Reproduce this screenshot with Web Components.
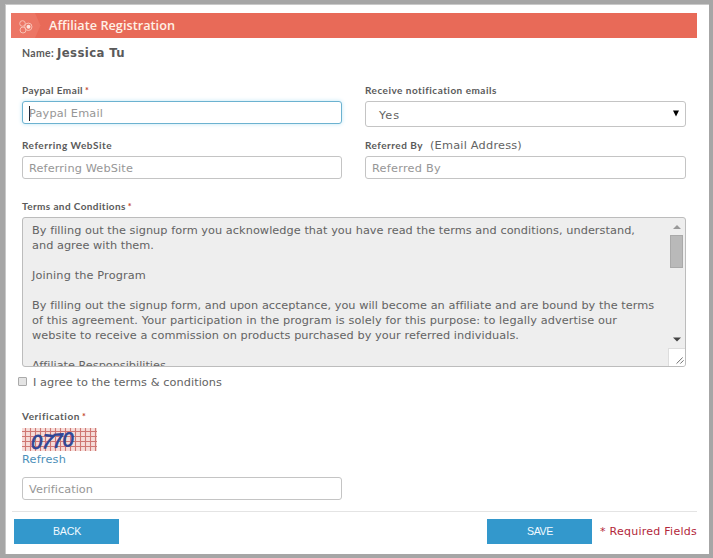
<!DOCTYPE html>
<html lang="en">
<head>
<meta charset="utf-8">
<title>Affiliate Registration</title>
<style>
html,body{margin:0;height:100%;background:#fff}
body{font:11.3px/15px "DejaVu Sans",Verdana,sans-serif;color:#636363;overflow:hidden}
</style>
</head>
<body>
<affiliate-page></affiliate-page>
<script>
class Base extends HTMLElement {
  connectedCallback() {
    if (this.shadowRoot) return;
    this.attachShadow({ mode: 'open' }).innerHTML = this.view();
    this.ready();
  }
  ready() {}
  a(n) { return this.getAttribute(n) || ''; }
}

/* One line of text, tracked so that it spans the width given in "w". */
customElements.define('text-run', class extends Base {
  view() { return '<style>:host{display:inline-block;white-space:pre}</style><span><slot></slot></span>'; }
  ready() {
    const w = +this.a('w'), n = this.textContent.length;
    const now = this.shadowRoot.querySelector('span').getBoundingClientRect().width;
    if (w && n && now) this.style.letterSpacing = ((w - now) / n).toFixed(4) + 'px';
  }
});

customElements.define('title-bar', class extends Base {
  view() { return `<style>
    :host{display:flex;align-items:center;height:25px;background:#e86a58;color:#fff1e6;font:600 12.7px/25px "Open Sans",sans-serif}
    svg{display:block;width:38px;height:25px;flex:none}
    </style>
    <svg viewBox="0 0 38 25"><path d="M0 0H24L29.500 12.500L24 25H0Z" fill="#ec7665"/>
      <g fill="none" stroke="#f8c0b3" stroke-width="1"><circle cx="11.500" cy="10.500" r="2.800"/><circle cx="12" cy="17" r="3"/><circle cx="17.300" cy="13.800" r="3.700"/></g>
      <circle cx="17.500" cy="13.800" r="2" fill="#fde3dc"/></svg><slot></slot>`; }
});

customElements.define('field-label', class extends Base {
  view() { return `<style>
    :host{display:flex;align-items:baseline;height:14px;line-height:14px}
    text-run{font-family:Lato,sans-serif;font-weight:700;font-size:10px;color:#5a5a5a}
    i{font:700 9px/14px Lato,sans-serif;color:#c4452f;margin-left:2px}
    slot{display:block;margin-left:7px}
    </style><text-run w="${this.a('w')}">${this.a('text')}</text-run>${this.hasAttribute('required') ? '<i>*</i>' : ''}<slot></slot>`; }
});

customElements.define('text-field', class extends Base {
  view() { return `<style>
    :host{display:flex;align-items:center;box-sizing:border-box;width:320px;height:23px;border:1px solid #c4c4c4;border-radius:3px;padding:1px 0 0 6px;color:#969696;background:#fff}
    :host([wide]){width:321px}
    :host([focused]){border-color:#6cb2d0;box-shadow:0 0 4px #bfe6f5}
    :host([focused])::before{content:"";width:1px;height:15px;margin-right:-1px;background:#222}
    </style><text-run w="${this.a('w')}">${this.a('placeholder')}</text-run>`; }
});

customElements.define('select-field', class extends Base {
  view() { return `<style>
    :host{display:flex;align-items:center;justify-content:space-between;box-sizing:border-box;width:321px;height:26px;border:1px solid #c4c4c4;border-radius:3px;padding:2px 6px 0 13px;background:#fff}
    svg{width:6px;height:7px;margin-bottom:3px}
    </style><slot></slot><svg viewBox="0 0 6 7"><path d="M0 .5H6L3 6.500Z" fill="#000"/></svg>`; }
});

customElements.define('terms-box', class extends Base {
  view() { return `<style>
    :host{display:flex;box-sizing:border-box;width:664px;height:150px;border:1px solid #bcbcbc;border-radius:3px;background:#eee;overflow:hidden}
    .copy{flex:1;padding:5px 0 0 9px}
    ::slotted(div){height:15px}
    .bar{width:17px;height:148px;display:flex;flex-direction:column;align-items:center}
    .up{width:8px;height:4px;margin-top:7px}
    .thumb{box-sizing:border-box;width:13px;height:33px;margin-top:6px;background:#b9b9b9;border:1px solid #a9a9a9}
    .down{width:8px;height:5px;margin-top:69px}
    .grip{width:17px;height:18px;margin-top:auto;background:#fff;border:solid #ddd;border-width:1px 0 0 1px;box-sizing:border-box}
    </style><div class="copy"><slot></slot></div>
    <div class="bar"><svg class="up" viewBox="0 0 8 4"><path d="M0 4L4 0L8 4Z" fill="#999"/></svg><div class="thumb"></div>
    <svg class="down" viewBox="0 0 8 5"><path d="M0 .5H8L4 4.500Z" fill="#444"/></svg>
    <svg class="grip" viewBox="0 0 17 18"><path d="M8 15.500L14.500 9M12 15.500L15.500 12" stroke="#666" fill="none"/></svg></div>`; }
});

customElements.define('agree-check', class extends Base {
  view() { return `<style>
    :host{display:flex;align-items:center;height:15px}
    b{box-sizing:border-box;width:9px;height:9px;border:1px solid #aaa;border-radius:1px;background:#e4e4e4;margin:0 6px 2px 0}
    </style><b></b><slot></slot>`; }
});

customElements.define('captcha-image', class extends Base {
  view() {
    let lines = '';
    for (let x = 3.5; x < 75; x += 5) lines += `M${x} 0V23`;
    for (let y = 3.5; y < 23; y += 5) lines += `M0 ${y}H75`;
    return `<style>:host{display:block;width:75px;height:23px}svg{display:block;overflow:visible}
    text{font:italic 400 20px "Liberation Sans",sans-serif;fill:#2f4796;stroke:#2f4796;stroke-width:.8}</style>
    <svg width="75" height="23" viewBox="0 0 75 23"><path d="M0 0H75V23H0Z" fill="#f6dcd9"/><path d="${lines}" stroke="#cf7773" stroke-width="1.100"/>
    <text x="9" y="20.500">0</text><text x="20" y="20.500" transform="rotate(5 26 14)">7</text><text x="30" y="19.500" transform="rotate(-4 36 14)">7</text><text x="40.500" y="18.500" transform="rotate(-4 46 12)">0</text></svg>`;
  }
});

customElements.define('action-button', class extends Base {
  view() { return `<style>
    :host{display:flex;align-items:center;justify-content:center;width:105px;height:25px;background:#3398cc;color:#f2faff;font:10.6px/25px "Liberation Sans",Arial,sans-serif}
    slot{display:block;margin:-1px 0 0 1px}
    </style><slot></slot>`; }
});

customElements.define('affiliate-page', class extends Base {
  view() { return `<style>
    :host{display:block;box-sizing:border-box;width:713px;height:558px;border:solid #a6a6a6;border-width:4px 4px 4px 5px;padding:9px 12px 0 6px;background:#fff;box-shadow:inset 1px 1px #c9c9c9}
    .form{padding-left:11px}
    .name{display:flex;align-items:baseline;height:15px;margin-top:8px}
    .name .k{font:700 10.5px/15px Lato,sans-serif;color:#5a5a5a;margin-right:3px}
    .name b{color:#5a5a5a;font-size:11.7px}
    .grid{display:grid;grid-template-columns:320px 321px;column-gap:23px;row-gap:11px;margin-top:22px;grid-template-rows:44px 40px}
    .grid field-label{margin-bottom:4px}
    .terms{margin:21px 0 4px}
    agree-check{margin:8px 0 0 -4px}
    .ver{margin:19px 0 5px}
    .link{display:block;height:15px;color:#4b8fb9;margin:1px 0 10px}
    hr{border:0;height:1px;background:#e4e4e4;margin:11px 0 7px 1px}
    .foot{display:flex;align-items:center;height:25px;padding-left:3px}
    .foot action-button+action-button{margin-left:368px}
    .req{color:#b3273a;margin-left:8px;font-size:11px}
    </style>
    <title-bar><text-run w="126">Affiliate Registration</text-run></title-bar>
    <div class="form">
      <div class="name"><text-run class="k" w="32">Name:</text-run><b><text-run w="68">Jessica Tu</text-run></b></div>
      <div class="grid">
        <div><field-label text="Paypal Email" w="61" required></field-label><text-field placeholder="Paypal Email" w="74" focused></text-field></div>
        <div><field-label text="Receive notification emails" w="132"></field-label><select-field><text-run w="21">Yes</text-run></select-field></div>
        <div><field-label text="Referring WebSite" w="90"></field-label><text-field placeholder="Referring WebSite" w="104"></text-field></div>
        <div><field-label text="Referred By" w="58"><text-run w="92">(Email Address)</text-run></field-label><text-field placeholder="Referred By" w="69" wide></text-field></div>
      </div>
      <field-label class="terms" text="Terms and Conditions" w="104" required></field-label>
      <terms-box>
        <div><text-run w="603">By filling out the signup form you acknowledge that you have read the terms and conditions, understand,</text-run></div>
        <div><text-run w="122">and agree with them.</text-run></div><div></div>
        <div><text-run w="114">Joining the Program</text-run></div><div></div>
        <div><text-run w="622">By filling out the signup form, and upon acceptance, you will become an affiliate and are bound by the terms</text-run></div>
        <div><text-run w="585">of this agreement. Your participation in the program is solely for this purpose: to legally advertise our</text-run></div>
        <div><text-run w="487">website to receive a commission on products purchased by your referred individuals.</text-run></div><div></div>
        <div><text-run w="134">Affiliate Responsibilities</text-run></div>
      </terms-box>
      <agree-check><text-run w="189">I agree to the terms &amp; conditions</text-run></agree-check>
      <field-label class="ver" text="Verification" w="58" required></field-label>
      <captcha-image></captcha-image>
      <span class="link"><text-run w="44">Refresh</text-run></span>
      <text-field placeholder="Verification" w="64"></text-field>
    </div>
    <hr>
    <div class="foot"><action-button><text-run w="28">BACK</text-run></action-button><action-button><text-run w="26">SAVE</text-run></action-button><text-run class="req" w="97">* Required Fields</text-run></div>`; }
});
</script>
</body>
</html>
